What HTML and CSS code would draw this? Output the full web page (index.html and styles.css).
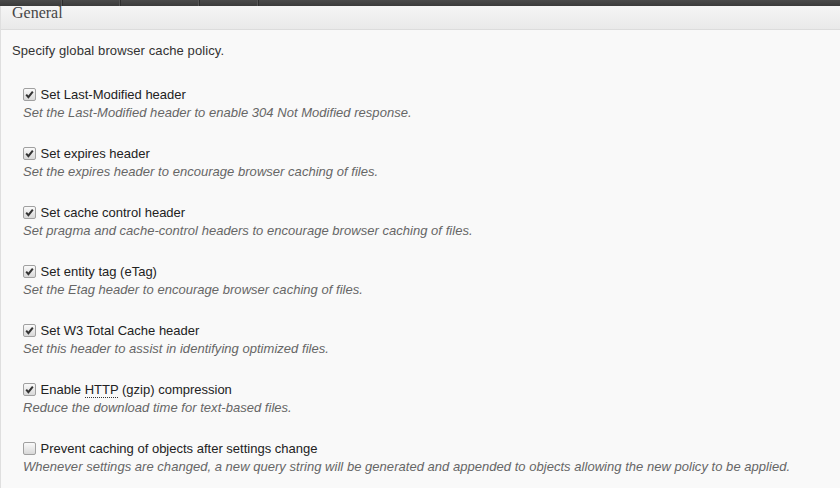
FILE: index.html
```html
<!DOCTYPE html>
<html>
<head>
<meta charset="utf-8">
<link rel="stylesheet" href="styles.css">
</head>
<body>
<div class="topbar">
  <span class="tab t1"></span><span class="tab t2"></span><span class="tab t3"></span><span class="tab t4"></span><span class="tab t5"></span>
</div>
<div class="postbox">
  <h3 class="hndle">General</h3>
  <div class="inside">
    <p class="intro">Specify global browser cache policy.</p>
    <div class="item">
      <label class="lbl"><span class="cb on"><svg viewBox="0 0 13 13" width="13" height="13"><path d="M3.2 6.6 L5.4 9.2 L9.8 3.6" fill="none" stroke="#333" stroke-width="2"/></svg></span> Set Last-Modified header</label>
      <div class="desc">Set the Last-Modified header to enable 304 Not Modified response.</div>
    </div>
    <div class="item">
      <label class="lbl"><span class="cb on"><svg viewBox="0 0 13 13" width="13" height="13"><path d="M3.2 6.6 L5.4 9.2 L9.8 3.6" fill="none" stroke="#333" stroke-width="2"/></svg></span> Set expires header</label>
      <div class="desc">Set the expires header to encourage browser caching of files.</div>
    </div>
    <div class="item">
      <label class="lbl"><span class="cb on"><svg viewBox="0 0 13 13" width="13" height="13"><path d="M3.2 6.6 L5.4 9.2 L9.8 3.6" fill="none" stroke="#333" stroke-width="2"/></svg></span> Set cache control header</label>
      <div class="desc">Set pragma and cache-control headers to encourage browser caching of files.</div>
    </div>
    <div class="item">
      <label class="lbl"><span class="cb on"><svg viewBox="0 0 13 13" width="13" height="13"><path d="M3.2 6.6 L5.4 9.2 L9.8 3.6" fill="none" stroke="#333" stroke-width="2"/></svg></span> Set entity tag (eTag)</label>
      <div class="desc">Set the Etag header to encourage browser caching of files.</div>
    </div>
    <div class="item">
      <label class="lbl"><span class="cb on"><svg viewBox="0 0 13 13" width="13" height="13"><path d="M3.2 6.6 L5.4 9.2 L9.8 3.6" fill="none" stroke="#333" stroke-width="2"/></svg></span> Set W3 Total Cache header</label>
      <div class="desc">Set this header to assist in identifying optimized files.</div>
    </div>
    <div class="item">
      <label class="lbl"><span class="cb on"><svg viewBox="0 0 13 13" width="13" height="13"><path d="M3.2 6.6 L5.4 9.2 L9.8 3.6" fill="none" stroke="#333" stroke-width="2"/></svg></span> Enable <abbr class="abbr">HTTP</abbr> (gzip) compression</label>
      <div class="desc">Reduce the download time for text-based files.</div>
    </div>
    <div class="item">
      <label class="lbl"><span class="cb"></span> Prevent caching of objects after settings change</label>
      <div class="desc">Whenever settings are changed, a new query string will be generated and appended to objects allowing the new policy to be applied.</div>
    </div>
  </div>
</div>
</body>
</html>
```
FILE: styles.css
```css
html, body {
  margin: 0;
  padding: 0;
  background: #f9f9f9;
  height: 100%;
  overflow: hidden;
}
body {
  font-family: "Liberation Sans", Arial, sans-serif;
  font-size: 13px;
  color: #333;
}
.topbar {
  height: 6px;
  background: linear-gradient(#4a4a4a, #3a3a3a);
  display: flex;
}
.tab {
  height: 6px;
  border-right: 1px solid #555;
  box-shadow: 1px 0 0 #2e2e2e;
}
.t1 { width: 61px; }
.t2 { width: 57px; }
.t3 { width: 78px; }
.t4 { width: 58px; }
.t5 { flex: 1; border-right: 0; box-shadow: none; }
.postbox {
  border-left: 1px solid #dfdfdf;
  background: #f9f9f9;
  min-height: 100%;
}
.hndle {
  margin: 0;
  height: 23px;
  padding: 0 0 0 11px;
  font-family: "Liberation Serif", "Times New Roman", serif;
  font-weight: normal;
  font-size: 16px;
  line-height: 14px;
  color: #464646;
  background: linear-gradient(#f5f5f5, #e9e9e9);
  border-bottom: 1px solid #dcdcdc;
}
.inside {
  padding: 0 0 0 11px;
}
.intro {
  margin: 12px 0 26px 0;
  line-height: 18px;
  color: #333;
  letter-spacing: 0.1px;
}
.item {
  margin: 0 0 23px 11px;
}
.lbl {
  display: block;
  line-height: 18px;
  color: #222;
}
.cb {
  box-sizing: border-box;
  width: 13px;
  height: 13px;
  margin: 0 1px 0 0;
  border: 1px solid #a0a0a0;
  border-radius: 2px;
  background: linear-gradient(#fafafa, #d8d8d8);
  display: inline-block;
  vertical-align: -2px;
  position: relative;
}
.cb svg {
  position: absolute;
  left: -1px;
  top: -1px;
}
.abbr {
  text-decoration: none;
  border-bottom: 1px dotted #333;
}
.desc {
  font-style: italic;
  color: #666;
  line-height: 18px;
  letter-spacing: 0.03px;
}
```
